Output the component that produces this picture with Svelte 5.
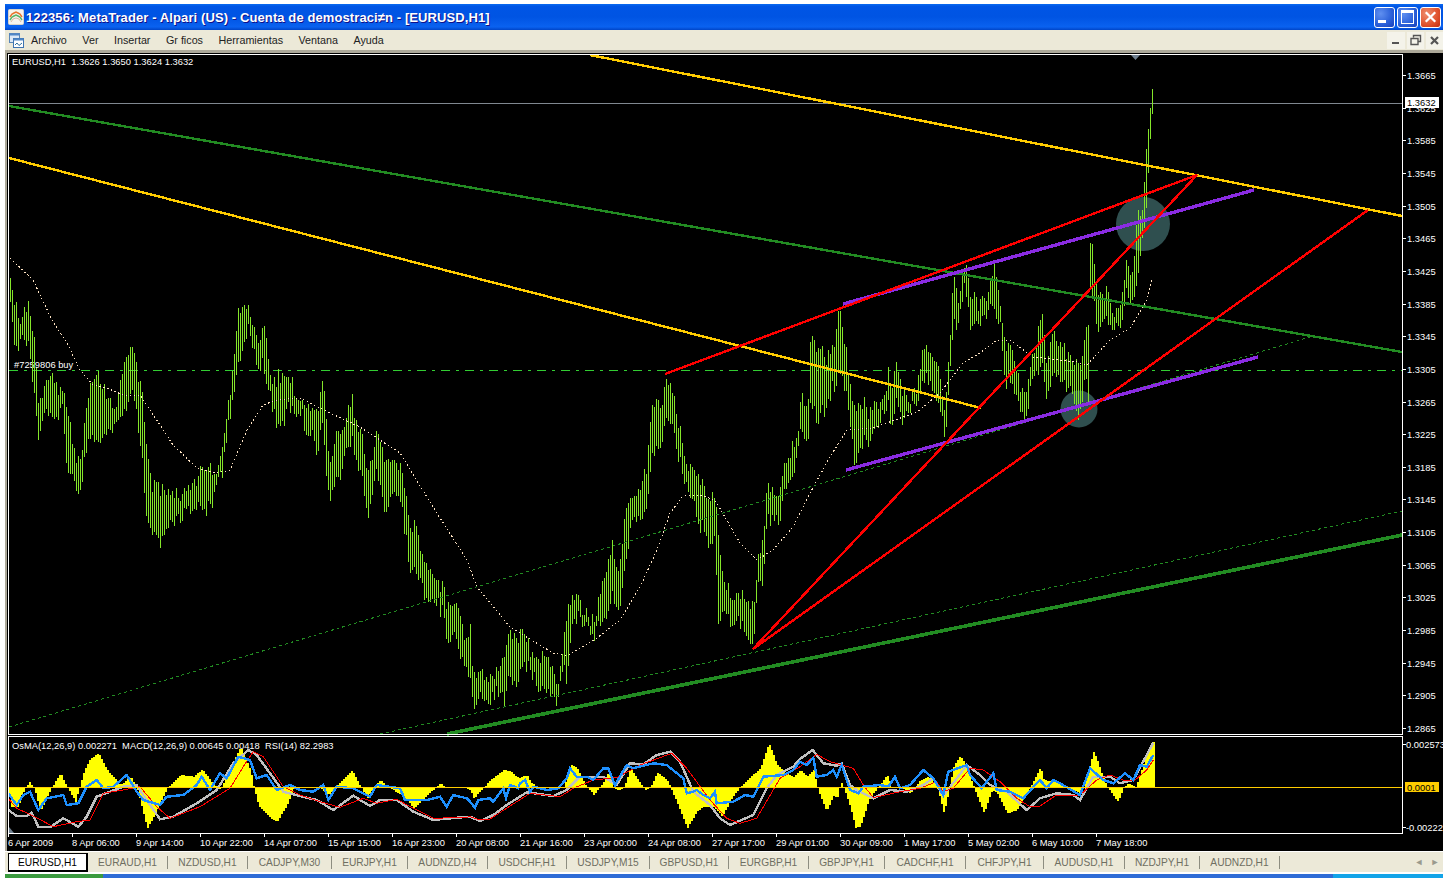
<script>
  const map = (a, ox, oy) => a.map(([x, y]) => [ox + x / 3, oy + y / 3]);
  const join = (a3, a10, a11, a4) => [
    ...map(a3, 0, 730).filter((p) => p[0] < 470),
    ...map(a10, 470, 735).filter((p) => p[0] < 800),
    ...map(a11, 800, 735).filter((p) => p[0] < 1040),
    ...map(a4, 1040, 730)
  ];
  const line = (pts) => 'M' + pts.map((p) => p[0].toFixed(1) + ' ' + p[1].toFixed(1)).join('L');
  const lerp = (pts, x, i = 1) => {
    if (x <= pts[0][0]) return pts[0][i];
    for (let k = 1; k < pts.length; k++) {
      if (x <= pts[k][0]) {
        const t = (x - pts[k - 1][0]) / (pts[k][0] - pts[k - 1][0] || 1);
        return pts[k - 1][i] + t * (pts[k][i] - pts[k - 1][i]);
      }
    }
    return pts[pts.length - 1][i];
  };

  let seed = 20090507;
  const rnd = () => {
    seed = (seed + 0x6d2b79f5) | 0;
    let t = Math.imul(seed ^ (seed >>> 15), 1 | seed);
    t = (t + Math.imul(t ^ (t >>> 7), 61 | t)) ^ t;
    return ((t ^ (t >>> 14)) >>> 0) / 4294967296;
  };

  const ranges = [
    [10,275,297],[15,300,357],[20,320,342],[28,297,342],[35,350,407],[38,395,435],[43,385,420],[50,377,420],[55,378,420],[62,390,407],[67,402,475],[73,450,485],[78,460,497],[82,443,480],[88,395,443],[97,367,443],[103,387,437],[115,410,430],[123,360,413],[132,345,393],[137,373,427],[142,390,463],[146,440,520],[152,482,530],[160,490,545],[168,490,525],[178,495,520],[190,490,515],[200,468,505],[210,465,510],[217,470,480],[222,443,470],[232,370,403],[238,310,367],[247,300,330],[257,343,370],[265,320,370],[270,373,403],[279,377,435],[288,373,407],[297,397,418],
    [302,395,407],[305,412,440],[312,403,432],[317,408,453],[323,377,423],[325,397,472],[329,467,500],[335,427,480],[343,430,467],[352,400,440],[355,420,460],[362,437,480],[368,470,515],[377,430,470],[385,458,517],[393,462,493],[400,458,500],[405,492,537],[410,520,567],[415,523,573],[422,560,592],[428,567,600],[437,580,605],[443,580,615],[447,607,647],[455,603,640],[460,612,657],[465,637,663],[470,630,683],[473,672,710],[480,670,703],[488,677,703],[497,668,693],[503,657,702],[510,627,677],[517,633,687],[523,623,657],[533,657,680],[543,653,693],[553,660,690],[555,693,713],[562,647,673],[567,608,683],[572,590,620],[578,590,617],[585,613,627],[595,620,637],[599,590,623],
    [602,577,620],[608,560,617],[612,547,600],[617,567,617],[623,537,587],[627,493,550],[633,500,520],[640,487,523],[647,463,507],[652,397,453],[660,407,453],[665,375,417],[673,387,430],[682,440,473],[688,470,493],[698,470,522],[708,497,547],[715,490,537],[717,517,622],[723,583,617],[733,593,623],[743,593,627],[753,600,650],[757,567,590],[763,527,577],[767,485,523],[773,493,520],[780,490,522],[785,458,490],[792,445,477],[797,433,447],[802,393,433],[808,398,438],[810,342,407],[817,342,420],[827,358,408],[833,343,390],[840,305,373],[847,357,397],[850,380,423],[853,407,463],[858,403,453],[867,407,440],[875,403,433],[883,400,418],[888,373,410],[892,390,433],[895,353,403],[902,390,423],[910,397,413],[918,380,403],[922,353,380],[927,340,377],[937,363,397],[945,417,442],[947,377,413],[950,335,373],[953,273,323],[958,292,322],[965,263,290],[970,290,327],[978,303,327],[987,293,313],[995,263,313],[1000,307,327],[1005,347,390],[1010,342,383],[1022,390,417],[1028,383,417],[1032,350,373],[1042,315,373],[1047,363,400],[1053,333,380],[1060,343,380],[1072,357,397],[1080,360,417],[1085,340,380],[1088,320,403],[1090,237,293],[1097,280,323],[1102,297,330],[1107,290,323],[1113,317,333],[1122,293,323],[1125,267,297],[1130,270,300],[1133,273,303],[1137,207,280],[1141,217,247],[1143,203,227],[1145,158,227],[1148,130,173],[1150,108,140],[1152,88,115]
  ];
  let barsD = '';
  for (let x = 10; x <= 1152; x += 2) {
    const k = x > 1130 ? 0.2 : 1;
    const shift = (rnd() - 0.5) * 12 * k;
    let t = lerp(ranges, x, 1) + shift + (rnd() - 0.3) * 10 * k;
    let b = lerp(ranges, x, 2) + shift - (rnd() - 0.3) * 10 * k;
    if (b - t < 9) b = t + 9;
    barsD += `M${x + 0.5} ${Math.round(t)}V${Math.round(b)}`;
  }

  const ma = [[10,258],[33,280],[53,322],[67,343],[80,370],[93,385],[107,388],[123,395],[140,395],[160,425],[173,445],[197,468],[217,473],[230,470],[247,430],[263,405],[277,400],[300,398],[330,413],[360,427],[400,453],[433,507],[467,560],[477,587],[510,627],[553,653],[567,656],[597,638],[620,620],[640,587],[657,550],[670,513],[683,496],[700,495],[715,500],[740,543],[757,560],[773,550],[793,527],[810,493],[830,457],[847,430],[873,428],[917,412],[940,393],[963,363],[980,353],[997,340],[1010,340],[1033,357],[1077,362],[1087,365],[1110,340],[1130,328],[1147,300],[1152,279]];

  const hist = join(
    [[25,172],[30,230],[55,230],[60,200],[78,170],[85,155],[100,172],[120,245],[150,178],[180,130],[200,172],[225,215],[250,125],[270,85],[295,70],[320,120],[360,165],[390,140],[410,175],[440,295],[460,260],[500,175],[540,135],[580,140],[605,118],[640,165],[660,180],[690,110],[720,50],[750,120],[760,172],[775,230],[810,265],[830,275],[860,225],[880,175],[960,175],[985,195],[1010,165],[1055,120],[1080,170],[1100,205],[1120,170],[1140,150],[1160,170],[1210,200],[1240,235],[1270,205],[1320,160],[1340,175],[1400,175],[1420,200]],
    [[0,165],[10,190],[40,157],[60,135],[100,105],[120,110],[145,130],[170,120],[180,140],[200,157],[280,160],[300,88],[320,100],[345,150],[370,180],[385,160],[400,140],[415,110],[430,160],[445,165],[460,157],[480,100],[510,145],[525,165],[540,157],[560,112],[590,135],[600,157],[620,205],[650,280],[680,230],[700,215],[730,215],[755,245],[790,180],[810,157],[840,125],[870,100],[895,25],[920,90],[945,115],[970,125],[990,108],[1020,120]],
    [[0,105],[20,125],[40,105],[50,157],[70,210],[78,230],[100,180],[110,190],[120,140],[130,157],[150,220],[165,278],[180,275],[205,195],[230,160],[260,120],[275,160],[300,155],[330,175],[360,135],[385,125],[410,157],[430,235],[445,170],[460,90],[480,62],[500,100],[520,157],[550,235],[575,165],[590,175],[620,235],[650,225],[690,157],[720,95],[745,130],[760,157],[790,157],[905,157],[950,200],[970,170],[985,150],[1020,130]],
    [[0,110],[10,150],[60,160],[120,190],[130,170],[160,62],[180,120],[200,172],[232,215],[250,172],[265,160],[285,172],[320,70],[340,35]]
  );
  let histD = '';
  for (let x = 9; x <= 1153; x += 2) {
    histD += `M${x + 1} 787V${Math.round(lerp(hist, x))}`;
  }

  const macd = line(join(
    [[25,240],[50,258],[80,258],[95,248],[115,290],[150,292],[190,265],[235,290],[260,260],[290,200],[330,185],[370,170],[410,165],[440,210],[480,268],[520,260],[590,220],[650,180],[700,100],[745,60],[770,75],[810,130],[850,185],[900,198],[950,210],[1000,240],[1060,197],[1110,228],[1140,210],[1190,210],[1240,245],[1300,270],[1370,263],[1420,265]],
    [[0,245],[30,258],[70,240],[110,210],[170,172],[250,183],[290,165],[330,125],[400,125],[440,150],[480,85],[520,88],[560,60],[600,50],[630,80],[670,170],[720,210],[750,250],[780,270],[850,240],[890,160],[920,120],[970,95],[1020,55]],
    [[0,72],[38,45],[70,85],[110,92],[125,85],[150,150],[170,165],[220,190],[270,165],[320,170],[370,150],[400,130],[430,183],[470,130],[500,90],[540,120],[570,150],[620,170],[680,225],[720,190],[770,172],[840,195],[890,120],[960,135],[1020,120]],
    [[0,205],[50,190],[100,195],[120,210],[160,140],[210,140],[240,160],[280,150],[340,38]]
  ));
  const signal = line(join(
    [[25,205],[50,235],[100,258],[160,290],[230,275],[270,270],[310,190],[370,180],[420,170],[470,230],[510,265],[600,230],[690,175],[730,110],[760,65],[790,80],[850,170],[900,195],[960,215],[1020,232],[1090,205],[1130,220],[1190,208],[1240,235],[1300,265],[1400,262]],
    [[0,245],[30,255],[60,252],[140,200],[180,175],[270,185],[310,160],[370,135],[440,128],[510,90],[605,55],[650,100],[720,195],[770,250],[810,265],[860,250],[930,130],[1000,95],[1020,65]],
    [[0,95],[50,58],[90,80],[160,100],[190,150],[220,188],[300,170],[360,160],[410,140],[430,170],[460,160],[510,100],[550,105],[600,140],[650,190],[690,215],[740,185],[850,187],[900,150],[930,120],[1020,130]],
    [[0,228],[50,195],[120,195],[170,150],[210,135],[250,150],[285,150],[320,120],[340,90]]
  ));
  const rsi = line(join(
    [[25,190],[50,225],[70,195],[90,185],[115,240],[140,205],[190,195],[200,225],[235,220],[260,170],[290,150],[310,175],[340,170],[380,135],[410,185],[430,210],[480,225],[500,200],[550,195],[590,165],[605,140],[630,180],[660,130],[680,145],[715,80],[750,90],[770,145],[800,135],[830,180],[870,165],[900,180],[940,185],[970,165],[985,210],[1010,170],[1060,175],[1110,200],[1130,165],[1200,175],[1215,210],[1280,210],[1320,200],[1340,230],[1360,195],[1400,205]],
    [[0,200],[15,218],[25,195],[60,190],[70,200],[100,160],[108,190],[120,150],[145,160],[150,145],[165,135],[180,170],[190,155],[230,165],[265,160],[290,130],[300,100],[320,125],[350,125],[370,135],[400,100],[415,100],[435,150],[470,90],[490,100],[550,85],[590,90],[640,130],[650,175],[670,170],[680,165],[700,180],[720,190],[735,170],[740,205],[790,200],[825,180],[850,185],[880,125],[940,120],[970,105],[1020,70]],
    [[0,80],[20,90],[40,68],[50,125],[80,120],[100,105],[110,125],[125,90],[150,165],[175,175],[190,155],[240,150],[265,155],[285,125],[300,160],[330,150],[370,105],[400,130],[430,180],[445,110],[500,90],[510,120],[545,160],[580,115],[590,165],[630,170],[670,190],[710,145],[730,155],[765,140],[800,170],[840,180],[870,100],[900,120],[940,150],[970,125],[1010,135],[1020,90]],
    [[0,150],[20,175],[40,150],[60,160],[120,195],[150,115],[190,150],[220,160],[255,130],[280,150],[300,105],[320,110],[340,75]]
  ));

  const prices = ['1.3665','1.3625','1.3585','1.3545','1.3505','1.3465','1.3425','1.3385','1.3345','1.3305','1.3265','1.3225','1.3185','1.3145','1.3105','1.3065','1.3025','1.2985','1.2945','1.2905','1.2865']
    .map((label, i) => ({ label, y: Math.round(75 + i * 32.65) }));
  const times = ['6 Apr 2009','8 Apr 06:00','9 Apr 14:00','10 Apr 22:00','14 Apr 07:00','15 Apr 15:00','16 Apr 23:00','20 Apr 08:00','21 Apr 16:00','23 Apr 00:00','24 Apr 08:00','27 Apr 17:00','29 Apr 01:00','30 Apr 09:00','1 May 17:00','5 May 02:00','6 May 10:00','7 May 18:00']
    .map((label, i) => ({ label, x: 8 + i * 64 }));
  const menus = ['Archivo', 'Ver', 'Insertar', 'Gr ficos', 'Herramientas', 'Ventana', 'Ayuda'];
  const tabs = [['EURAUD,H1',80],['NZDUSD,H1',80],['CADJPY,M30',84],['EURJPY,H1',76],['AUDNZD,H4',80],['USDCHF,H1',79],['USDJPY,M15',83],['GBPUSD,H1',79],['EURGBP,H1',80],['GBPJPY,H1',76],['CADCHF,H1',81],['CHFJPY,H1',78],['AUDUSD,H1',81],['NZDJPY,H1',75],['AUDNZD,H1',80]];
</script>

<div class="page">
  <div class="win">
    <header class="title">
      <svg class="appicon" viewBox="0 0 16 16" width="16" height="16">
        <rect x="0.5" y="0.5" width="15" height="15" rx="1" fill="#f7f4ee" stroke="#d8d3c8" />
        <path d="M2 8L4 5L6 4L8 3L10 4L12 5L14 8" fill="none" stroke="#e8742c" stroke-width="1.4" />
        <path d="M2 11L4 8L6 7L8 6L10 7L12 8L14 11" fill="none" stroke="#58b56a" stroke-width="1.4" />
        <path d="M3 13L5 10L8 9L11 10L13 13" fill="none" stroke="#d8b9a6" stroke-width="1" />
      </svg>
      <span class="caption">122356: MetaTrader - Alpari (US) - Cuenta de demostraci≠n - [EURUSD,H1]</span>
      <div class="winbtns">
        <button class="wb" aria-label="Minimizar"><i class="gmin"></i></button>
        <button class="wb" aria-label="Maximizar"><i class="gmax"></i></button>
        <button class="wb close" aria-label="Cerrar">
          <svg viewBox="0 0 20 20" width="20" height="20"><path d="M5 5L15 15M15 5L5 15" stroke="#fff" stroke-width="2.4" /></svg>
        </button>
      </div>
    </header>

    <nav class="menu">
      <svg class="docicon" viewBox="0 0 15 15" width="15" height="15">
        <rect x="0.5" y="0.5" width="10" height="9" fill="#dbe8f6" stroke="#5a86b8" />
        <rect x="0.5" y="0.5" width="10" height="2" fill="#4f86c6" />
        <rect x="4.5" y="5.5" width="10" height="9" fill="#fff" stroke="#3f74b0" />
        <rect x="4.5" y="5.5" width="10" height="2" fill="#4f86c6" />
        <path d="M6 12L8 10L10 12.5L13 10" fill="none" stroke="#2f6f9f" />
      </svg>
      {#each menus as m}<span class="mi">{m}</span>{/each}
      <div class="mdibtns">
        <span class="mb"><svg viewBox="0 0 18 17" width="18" height="17"><rect x="5" y="10" width="7" height="2" fill="#555" /></svg></span>
        <span class="mb"><svg viewBox="0 0 17 17" width="17" height="17"><path d="M6.5 5.5V3.5H13.5V9.5H11M4 6.5H11V12.5H4Z" fill="none" stroke="#555" stroke-width="1.4" /></svg></span>
        <span class="mb"><svg viewBox="0 0 17 17" width="17" height="17"><path d="M5 5L12 12M12 5L5 12" stroke="#555" stroke-width="2.2" /></svg></span>
      </div>
    </nav>

    <main class="chart">
      <svg viewBox="5 50 1438 801" width="1438" height="801">
        <rect x="5" y="50" width="1438" height="801" fill="#000" />
        <rect x="5" y="50" width="2" height="801" fill="#aca899" />
        <rect x="5" y="50" width="1438" height="3" fill="#aca899" />

        <text class="lbl" x="12" y="65">EURUSD,H1  1.3626 1.3650 1.3624 1.3632</text>
        <text class="lbl" x="14" y="368">#7259806 buy</text>

        <circle cx="1143" cy="224" r="27" fill="#2f4f4f" />
        <circle cx="1079" cy="409" r="18.5" fill="#2f4f4f" />

        <g class="crisp">
          <path d="M9 103.5H1402" stroke="#808890" />
          <path d="M9 370.5H1402" stroke="#32cd32" stroke-dasharray="9 6 3 6" />
          <path d={barsD} stroke="#84e62a" fill="none" />
          <path d={line(ma)} class="dots" />
          <path d="M9 727L1310 337" class="thin" />
          <path d="M380 734L1402 511" class="thin" />
          <path d="M9 106L1402 352" stroke="#228b22" stroke-width="2.4" />
          <path d="M447 734L1402 535" stroke="#228b22" stroke-width="3.6" />
          <path d="M590 55L1402 216" stroke="#ffcc00" stroke-width="2.4" />
          <path d="M9 158L981 408" stroke="#ffcc00" stroke-width="2.4" />
          <path d="M843 304L1254 190" stroke="#8a2be2" stroke-width="3.4" />
          <path d="M846 470L1258 357" stroke="#8a2be2" stroke-width="3.4" />
          <path d="M665 374L1197 175" stroke="#f00" stroke-width="2.4" />
          <path d="M753 649L1197 175" stroke="#f00" stroke-width="2.4" />
          <path d="M753 649L1368 210" stroke="#f00" stroke-width="2.4" />
        </g>
        <path d="M1131 55H1140L1135.5 60Z" fill="#708090" />

        <text class="lbl" x="12" y="749">OsMA(12,26,9) 0.002271  MACD(12,26,9) 0.00645 0.00418  RSI(14) 82.2983</text>
        <g class="crisp">
          <path d={histD} stroke="#ff0" stroke-width="2" fill="none" />
          <path d={macd} fill="none" stroke="#c0c0c0" stroke-width="2.4" />
          <path d={signal} fill="none" stroke="#f00" />
          <path d={rsi} fill="none" stroke="#1e90ff" stroke-width="2.4" />
          <path d="M9 787.5H1402" stroke="#ffcc00" />
        </g>
        <path d="M9 827L14 833H9Z" fill="#708090" />

        <rect class="frame" x="8.5" y="54.5" width="1394" height="680" />
        <rect class="frame" x="8.5" y="736.5" width="1394" height="97" />

        {#each prices as p}
          <path class="tick" d="M1403 {p.y + 0.5}H1406" />
          <text class="lbl" x="1407" y={p.y + 4}>{p.label}</text>
        {/each}
        <rect x="1405" y="97" width="34" height="11" fill="#fff" />
        <text class="lbl dark" x="1407" y="106">1.3632</text>

        <path class="tick" d="M1403 744.5H1406M1403 827.5H1406" />
        <text class="lbl" x="1406" y="748">0.002573</text>
        <text class="lbl" x="1406" y="831">-0.00222</text>
        <rect x="1405" y="782" width="34" height="10" fill="#ffcc00" />
        <text class="lbl dark" x="1407" y="791">0.0001</text>

        {#each times as t}
          <path class="tick" d="M{t.x + 0.5} 834V837" />
          <text class="lbl" x={t.x} y="846">{t.label}</text>
        {/each}
      </svg>
    </main>

    <div class="tabs">
      <span class="tab active">EURUSD,H1</span>
      {#each tabs as [name, w]}
        <span class="tab" style="width:{w}px">{name}</span>
      {/each}
      <span class="arrows"><i>◄</i><i>►</i></span>
    </div>
    <div class="gap"></div>
    <div class="taskbar"><span class="start"></span><span class="tasks"></span><span class="tray"></span></div>
  </div>
</div>

<style>
  :global(body) { margin: 0; background: #fff; }
  .page { width: 1448px; height: 878px; padding: 4px 5px 0; box-sizing: border-box; overflow: hidden; background: #fff; }
  .win { display: flex; flex-direction: column; width: 1438px; height: 874px; }
  .title {
    height: 26px; flex: none; display: flex; align-items: center; padding-left: 3px; box-sizing: border-box;
    background: linear-gradient(#0a6af0 0, #0055e5 10%, #0054e3 50%, #0a62f0 88%, #0045c8 100%);
  }
  .appicon { flex: none; margin-right: 2px; }
  .caption {
    font: bold 13px "Liberation Sans", sans-serif; letter-spacing: 0.1px; color: #fff;
    text-shadow: 1px 1px #0f1089; white-space: pre;
  }
  .winbtns { margin-left: auto; display: flex; gap: 2px; padding-right: 2px; }
  .wb {
    width: 21px; height: 21px; padding: 0; position: relative; box-sizing: border-box; border: 1px solid #fff; border-radius: 3px;
    background: radial-gradient(circle at 30% 30%, #5f8ff0, #2a5fd8 60%, #1a3fb8);
    display: flex; align-items: center; justify-content: center;
  }
  .wb.close { background: radial-gradient(circle at 30% 30%, #ee8f6f, #e0512c 60%, #c02c10); }
  .gmin { width: 8px; height: 3px; background: #fff; margin: 9px 6px 0 0; }
  .gmax { width: 11px; height: 10px; border: 1px solid #fff; border-top-width: 3px; box-sizing: content-box; }
  .menu {
    height: 20px; flex: none; display: flex; align-items: center; background: #ece9d8; padding-left: 4px; box-sizing: border-box;
    font: 10.75px "Liberation Sans", sans-serif; color: #222;
  }
  .docicon { flex: none; margin-right: 7px; }
  .mi { margin-right: 15.5px; white-space: pre; }
  .mdibtns { margin-left: auto; display: flex; gap: 2px; }
  .mb { height: 17px; background: #f4f3ea; display: block; line-height: 0; }
  .chart { height: 801px; flex: none; line-height: 0; }
  .chart svg { display: block; }
  .lbl { font: 9.35px "Liberation Sans", sans-serif; fill: #fff; white-space: pre; }
  .dark { fill: #000; }
  .crisp { shape-rendering: crispEdges; }
  .dots { fill: none; stroke: #ffe4c4; stroke-dasharray: 1.5 2.5; }
  .thin { fill: none; stroke: #228b22; stroke-dasharray: 3 3; }
  .frame { fill: none; stroke: #fff; shape-rendering: crispEdges; }
  .tick { stroke: #fff; shape-rendering: crispEdges; }
  .tabs {
    height: 21px; flex: none; display: flex; align-items: center; background: #ece9d8; padding-left: 3px; box-sizing: border-box;
    font: 10.2px "Liberation Sans", sans-serif; color: #6f6f62; border-top: 1px solid #fff;
  }
  .tab { height: 13px; line-height: 13px; text-align: center; border-right: 1px solid #8d8d80; box-sizing: border-box; flex: none; }
  .tab.active {
    width: 80px; height: 19px; line-height: 18px; background: #fff; color: #000; border: 1px solid #000; border-width: 1px 2px 2px 1px;
  }
  .arrows { margin-left: auto; display: flex; gap: 6px; padding-right: 3px; font-size: 9px; color: #9a9a8d; }
  .arrows i { font-style: normal; width: 10px; text-align: center; }
  .gap { height: 2px; flex: none; background: #fff; }
  .taskbar { height: 4px; flex: none; display: flex; }
  .start { width: 98px; background: #3a9a3e; }
  .tasks { flex: 1; background: #2e6cd6; }
  .tray { width: 110px; background: #12a4e8; }
</style>
